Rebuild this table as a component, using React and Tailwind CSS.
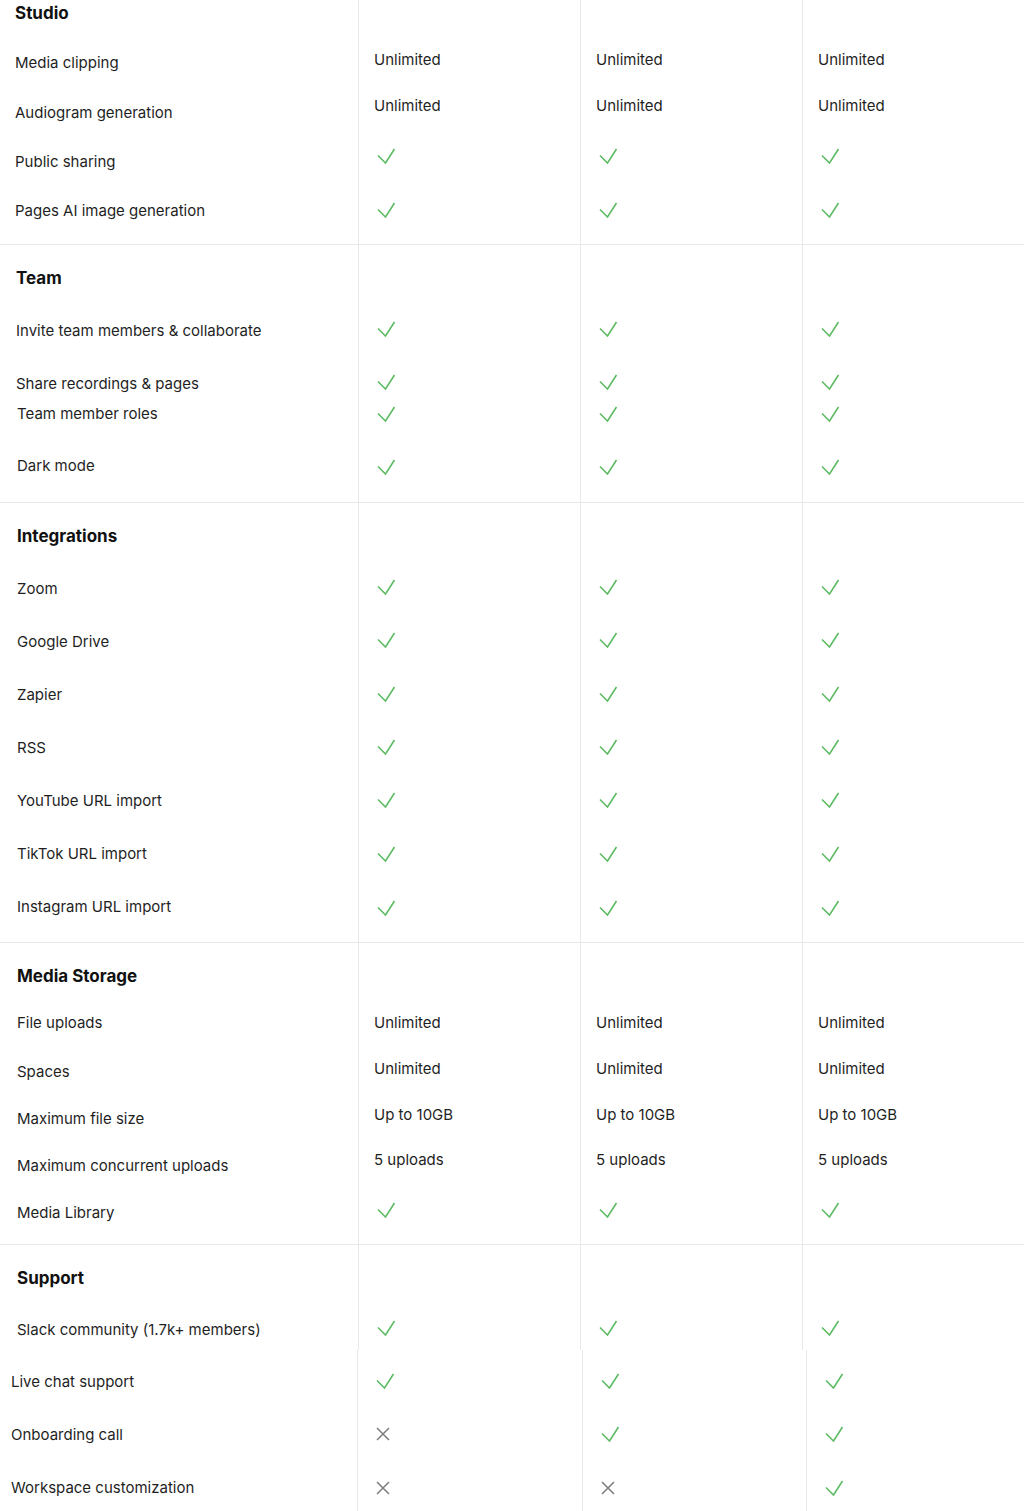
import React from "react";

const Check = () => (
  <svg width="19" height="16" viewBox="0 0 19 16" fill="none" className="ml-[3px]">
    <path d="M1 7.5 L8.5 15 L17.5 1" stroke="#5dbb63" strokeWidth="1.6" />
  </svg>
);

const Cross = () => (
  <svg width="14" height="14" viewBox="0 0 14 14" fill="none" className="ml-[3px]">
    <path d="M1 1 L13 13 M13 1 L1 13" stroke="#7d7d7d" strokeWidth="1.5" />
  </svg>
);

const U = "Unlimited";
const Y = "Y";
const N = "N";

const blocks = [
  {
    box: "h-[245px] border-b",
    cols: "grid-cols-[358px_222px_222px_222px]",
    pad: "pl-[15px]",
    labelSpacer: "h-0",
    title: "Studio",
    titleH: "h-[50px]",
    labels: [
      ["Media clipping", "h-[50px]"],
      ["Audiogram generation", "h-[49px]"],
      ["Public sharing", "h-[49px]"],
      ["Pages AI image generation", "h-[46px]"],
    ],
    valueSpacer: "h-[47px]",
    values: [
      [[U, U, U], "h-[46px]"],
      [[U, U, U], "h-[51px]"],
      [[Y, Y, Y], "h-[54px]"],
      [[Y, Y, Y], "h-[46px]"],
    ],
  },
  {
    box: "h-[258px] border-b",
    cols: "grid-cols-[358px_222px_222px_222px]",
    pad: "pl-[16px]",
    labelSpacer: "h-[20px]",
    title: "Team",
    titleH: "h-[53px]",
    labels: [
      ["Invite team members & collaborate", "h-[53px]"],
      ["Share recordings & pages", "h-[30px]"],
      ["Team member roles", "h-[52px]", "pl-[1px]"],
      ["Dark mode", "h-[49px]", "pl-[1px]"],
    ],
    valueSpacer: "h-[72px]",
    values: [
      [[Y, Y, Y], "h-[53px]"],
      [[Y, Y, Y], "h-[32px]"],
      [[Y, Y, Y], "h-[53px]"],
      [[Y, Y, Y], "h-[47px]"],
    ],
  },
  {
    box: "h-[440px] border-b",
    cols: "grid-cols-[358px_222px_222px_222px]",
    pad: "pl-[17px]",
    labelSpacer: "h-[20px]",
    title: "Integrations",
    titleH: "h-[53px]",
    labels: [
      ["Zoom", "h-[53px]"],
      ["Google Drive", "h-[53px]"],
      ["Zapier", "h-[53px]"],
      ["RSS", "h-[53px]"],
      ["YouTube URL import", "h-[53px]"],
      ["TikTok URL import", "h-[53px]"],
      ["Instagram URL import", "h-[48px]"],
    ],
    valueSpacer: "h-[72px]",
    values: [
      [[Y, Y, Y], "h-[53px]"],
      [[Y, Y, Y], "h-[54px]"],
      [[Y, Y, Y], "h-[53px]"],
      [[Y, Y, Y], "h-[53px]"],
      [[Y, Y, Y], "h-[54px]"],
      [[Y, Y, Y], "h-[54px]"],
      [[Y, Y, Y], "h-[46px]"],
    ],
  },
  {
    box: "h-[302px] border-b",
    cols: "grid-cols-[358px_222px_222px_222px]",
    pad: "pl-[17px]",
    labelSpacer: "h-[20px]",
    title: "Media Storage",
    titleH: "h-[47px]",
    labels: [
      ["File uploads", "h-[49px]"],
      ["Spaces", "h-[47px]"],
      ["Maximum file size", "h-[47px]"],
      ["Maximum concurrent uploads", "h-[47px]"],
      ["Media Library", "h-[44px]"],
    ],
    valueSpacer: "h-[67px]",
    values: [
      [[U, U, U], "h-[46px]"],
      [[U, U, U], "h-[46px]"],
      [["Up to 10GB", "Up to 10GB", "Up to 10GB"], "h-[45px]"],
      [["5 uploads", "5 uploads", "5 uploads"], "h-[51px]"],
      [[Y, Y, Y], "h-[46px]"],
    ],
  },
  {
    box: "h-[105px]",
    cols: "grid-cols-[358px_222px_222px_222px]",
    pad: "pl-[17px]",
    labelSpacer: "h-[20px]",
    title: "Support",
    titleH: "h-[52px]",
    labels: [["Slack community (1.7k+ members)", "h-[33px]"]],
    valueSpacer: "h-[71px]",
    values: [[[Y, Y, Y], "h-[34px]"]],
  },
  {
    box: "h-[161px]",
    cols: "grid-cols-[357px_225px_224px_218px]",
    pad: "pl-[11px]",
    labelSpacer: "h-[19px]",
    labels: [
      ["Live chat support", "h-[53px]"],
      ["Onboarding call", "h-[53px]"],
      ["Workspace customization", "h-[36px]"],
    ],
    valueSpacer: "h-[19px]",
    values: [
      [[Y, Y, Y], "h-[53px]"],
      [[N, Y, Y], "h-[54px]"],
      [[N, N, Y], "h-[35px]"],
    ],
  },
];

const Cell = ({ v }) => {
  if (v === Y) return <Check />;
  if (v === N) return <Cross />;
  return <span className="pt-[2px]">{v}</span>;
};

const Block = ({ b }) => (
  <div className={`grid ${b.cols} ${b.box} border-[#e8e8e8] overflow-hidden`}>
    <div className={`flex flex-col ${b.pad}`}>
      <div className={b.labelSpacer} />
      {b.title && (
        <div className={`${b.titleH} shrink-0`}>
          <div className="h-6 pt-[4px] flex items-center text-[17px] font-bold text-[#111]">{b.title}</div>
        </div>
      )}
      {b.labels.map(([t, h, extra]) => (
        <div key={t} className={`${h} shrink-0 ${extra || ""}`}>
          <div className="h-6 pt-[2px] flex items-center whitespace-nowrap">{t}</div>
        </div>
      ))}
    </div>
    {[0, 1, 2].map((c) => (
      <div key={c} className="flex flex-col border-l border-[#e8e8e8] pl-[15px]">
        <div className={b.valueSpacer} />
        {b.values.map(([vals, h], i) => (
          <div key={i} className={`${h} shrink-0`}>
            <div className="h-6 flex items-center">
              <Cell v={vals[c]} />
            </div>
          </div>
        ))}
      </div>
    ))}
  </div>
);

export default function App() {
  return (
    <div
      className="w-[1024px] h-[1511px] bg-white text-[15px] text-[#1f1f1f] overflow-hidden"
      style={{ fontFamily: "Inter, 'Noto Sans', sans-serif" }}
    >
      {blocks.map((b, i) => (
        <Block key={i} b={b} />
      ))}
    </div>
  );
}
